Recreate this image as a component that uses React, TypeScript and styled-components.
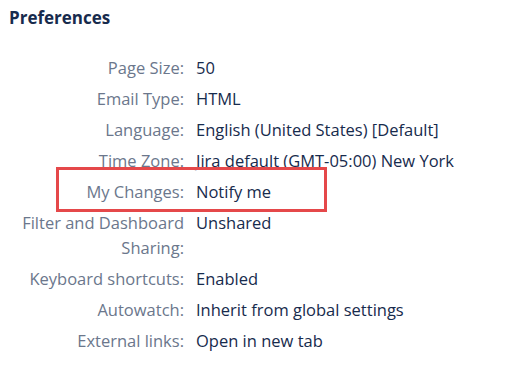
import React from 'react';
import styled, { createGlobalStyle } from 'styled-components';

const GlobalStyle = createGlobalStyle`
  html, body {
    margin: 0;
    background: #ffffff;
  }
  body {
    font-family: "Open Sans", "Noto Sans", sans-serif;
    color: #172b4d;
  }
`;

const Page = styled.section`
  padding: 8px 0 0 9px;
  width: 512px;
  height: 383px;
  box-sizing: border-box;
`;

const Heading = styled.h2`
  margin: 0;
  font-size: 17px;
  font-weight: 700;
  line-height: 20px;
  color: #172b4d;
`;

const List = styled.dl`
  display: grid;
  grid-template-columns: 168px auto;
  column-gap: 12px;
  margin: 24px 0 0 7px;
  justify-content: start;
`;

const Row = styled.div`
  display: contents;
`;

const Label = styled.dt`
  margin: 0;
  padding: 3px 0;
  text-align: right;
  font-size: 16.5px;
  line-height: 25px;
  color: #6b778c;
`;

const Value = styled.dd`
  position: relative;
  margin: 0;
  padding: 3px 0;
  font-size: 16.5px;
  line-height: 25px;
  color: #172b4d;
  white-space: nowrap;
`;

const Marker = styled.span`
  position: absolute;
  left: -140px;
  top: -9px;
  width: 265px;
  height: 39px;
  border: 3px solid #e5484a;
  pointer-events: none;
`;

const prefs = [
  { label: 'Page Size:', value: '50' },
  { label: 'Email Type:', value: 'HTML' },
  { label: 'Language:', value: 'English (United States) [Default]' },
  { label: 'Time Zone:', value: 'Jira default (GMT-05:00) New York' },
  { label: 'My Changes:', value: 'Notify me', marked: true },
  { label: 'Filter and Dashboard Sharing:', value: 'Unshared' },
  { label: 'Keyboard shortcuts:', value: 'Enabled' },
  { label: 'Autowatch:', value: 'Inherit from global settings' },
  { label: 'External links:', value: 'Open in new tab' },
];

const App: React.FC = () => {
  return (
    <>
      <GlobalStyle />
      <Page>
        <Heading>Preferences</Heading>
        <List>
          {prefs.map((p) => (
            <Row key={p.label}>
              <Label>{p.label}</Label>
              <Value>
                {p.value}
                {p.marked && <Marker />}
              </Value>
            </Row>
          ))}
        </List>
      </Page>
    </>
  );
};

export default App;
